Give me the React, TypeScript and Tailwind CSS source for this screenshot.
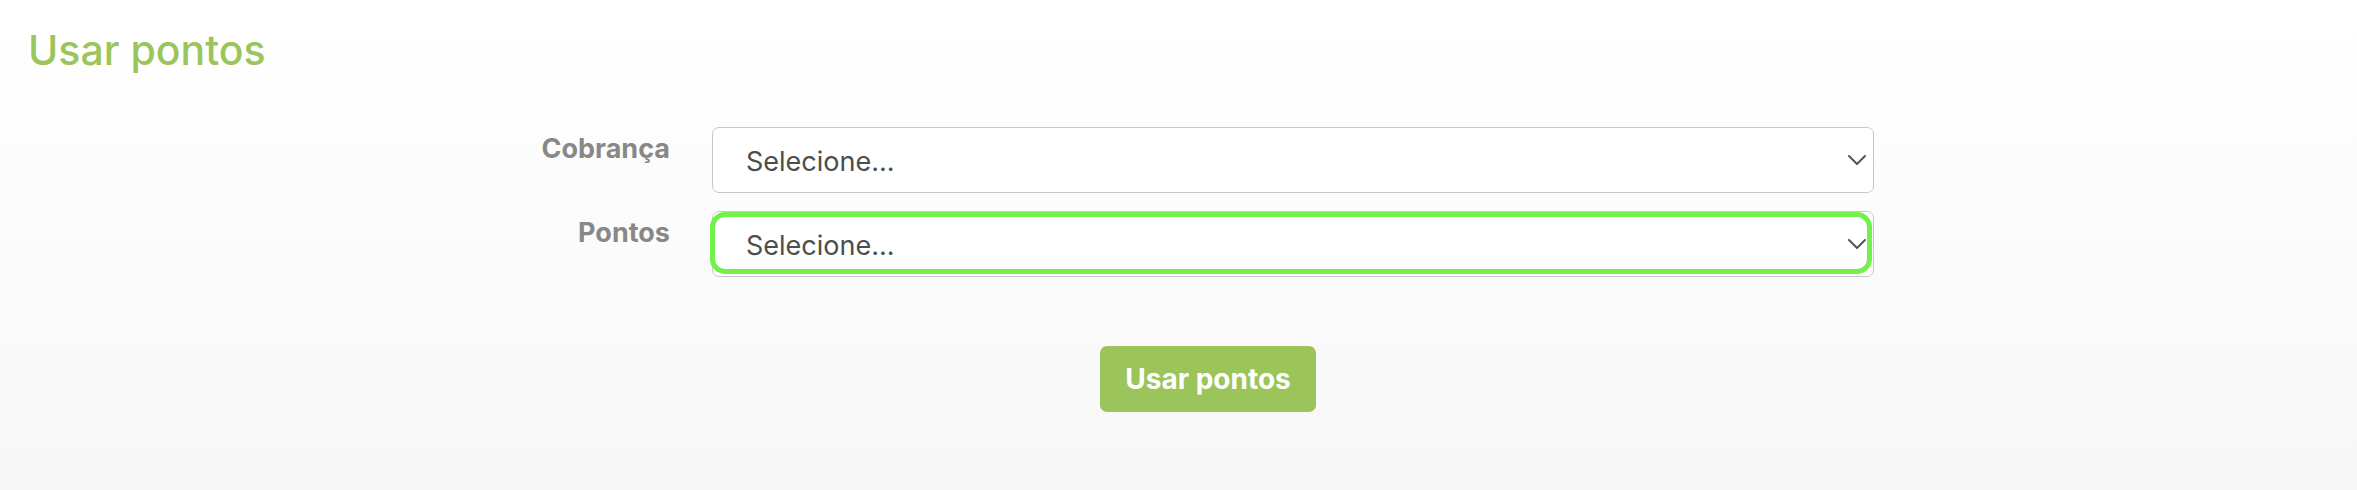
const font = { fontFamily: 'Inter, "Liberation Sans", sans-serif' }

function Chevron() {
  return (
    <svg width="18" height="10" viewBox="0 0 18 10" fill="none" className="shrink-0">
      <path d="M1 1l8 8 8-8" stroke="#555555" strokeWidth="2" strokeLinecap="round" strokeLinejoin="round" />
    </svg>
  )
}

function SelectBox({ focused = false }: { focused?: boolean }) {
  return (
    <div className="relative flex h-[66px] w-[1162px] items-center justify-between rounded-[7px] border border-[#c8c8c8] bg-white pl-[33px] pr-[7px]">
      <span className="pt-[3px] text-[27px] leading-[27px] text-[#4d4d4d]">Selecione...</span>
      <Chevron />
      {focused && (
        <div className="pointer-events-none absolute -left-[3px] top-0 right-[1px] bottom-[2px] rounded-[15px] border-[5px] border-[#72f04c]" />
      )}
    </div>
  )
}

function Row({ label, focused }: { label: string; focused?: boolean }) {
  return (
    <div className="flex items-start">
      <div className="w-[187px] pt-[8px] text-right text-[27px] font-bold leading-[27px] text-[#888888]">{label}</div>
      <div className="ml-[42px]">
        <SelectBox focused={focused} />
      </div>
    </div>
  )
}

export default function App() {
  return (
    <div style={font} className="min-h-[490px] w-full bg-gradient-to-b from-white from-[4%] to-[#f7f7f7]">
      <h1 className="pl-[28px] pt-[29px] text-[41px] font-medium leading-[42px] text-[#9bc55a]">Usar pontos</h1>
      <div className="mt-[56px] flex flex-col gap-[18px] pl-[483px]">
        <Row label="Cobrança" />
        <Row label="Pontos" focused />
      </div>
      <div className="mt-[69px] pl-[1100px]">
        <button className="h-[66px] w-[216px] rounded-[7px] bg-[#9bc55a] text-[28px] font-bold text-white">Usar pontos</button>
      </div>
    </div>
  )
}
